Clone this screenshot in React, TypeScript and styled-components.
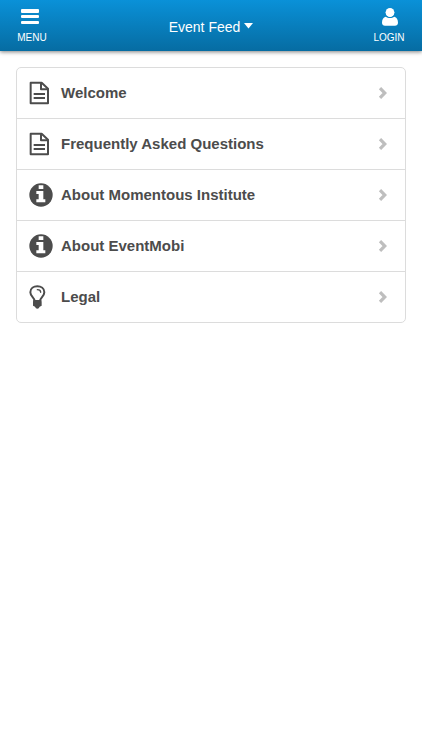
import React from "react";
import styled, { createGlobalStyle } from "styled-components";

const GlobalStyle = createGlobalStyle`
  *, *::before, *::after { box-sizing: border-box; }
  body {
    margin: 0;
    background: #fff;
    color: #4c4c4c;
    font-family: "Liberation Sans", Arial, sans-serif;
  }
`;

const Header = styled.header`
  display: grid;
  grid-template-columns: 64px 1fr 64px;
  height: 51px;
  background: linear-gradient(#0a91d8, #066ca2);
  box-shadow: 0 1px 4px rgba(0, 0, 0, 0.5);
`;

const BarButton = styled.button`
  display: flex;
  flex-direction: column;
  align-items: center;
  gap: 6px;
  padding: 8px 0 0;
  border: 0;
  background: none;
  color: #fff;
  font: 10px/12px "Liberation Sans", Arial, sans-serif;
  cursor: pointer;

  svg {
    display: block;
  }
`;

const MenuButton = styled(BarButton)`
  svg {
    margin-right: 4px;
  }
`;

const LoginButton = styled(BarButton)`
  padding-right: 2px;

  svg {
    margin-left: 1px;
  }
`;

const TitleButton = styled.button`
  display: flex;
  align-items: center;
  justify-content: center;
  gap: 4px;
  padding: 2px 0 0;
  border: 0;
  background: none;
  color: #fff;
  font: 14px/20px "Liberation Sans", Arial, sans-serif;
  cursor: pointer;
`;

const Caret = styled.svg`
  margin-bottom: 2px;
`;

const Main = styled.main`
  padding: 16px;
`;

const List = styled.ul`
  margin: 0;
  padding: 0;
  list-style: none;
  border: 1px solid #dcdcdc;
  border-radius: 5px;
  overflow: hidden;
`;

const Item = styled.li`
  & + & {
    border-top: 1px solid #dcdcdc;
  }
`;

const ItemLink = styled.a`
  display: grid;
  grid-template-columns: 24px 1fr 9px;
  column-gap: 8px;
  align-items: center;
  height: 50px;
  padding: 0 18px 0 12px;
  color: #4c4c4c;
  font-size: 15px;
  font-weight: bold;
  line-height: 20px;
  text-decoration: none;
`;

const DocumentIcon = () => (
  <svg width="24" height="24" viewBox="0 0 72 72" aria-hidden="true" fill="none" stroke="#4c4c4c" strokeWidth="6" strokeLinejoin="round">
    <path d="M5 5H38L57 23V67H5Z" />
    <path d="M36 6V25H57" />
    <path d="M14 39H48M14 51H48" />
  </svg>
);

const InfoIcon = () => (
  <svg width="24" height="24" viewBox="0 0 72 72" aria-hidden="true">
    <circle cx="36" cy="36" r="35" fill="#4c4c4c" />
    <path fill="#fff" d="M29 7H43V18H29ZM22 24H43V49H49V58H22V49H29V33H22Z" />
  </svg>
);

const BulbIcon = () => (
  <svg width="24" height="24" viewBox="0 0 72 72" aria-hidden="true">
    <path
      fill="none"
      stroke="#4c4c4c"
      strokeWidth="6"
      d="M17 48C16 38 4 34 4 22C4 10 14 4 25 4S46 10 46 22C46 34 34 38 33 48"
    />
    <path fill="none" stroke="#4c4c4c" strokeWidth="4" strokeLinecap="round" d="M25 14C31 14 35 17 35 22" />
    <path fill="#4c4c4c" d="M13 45H37L38 50L38 62L32 65Q30 71 25 71T18 65L12 62L12 50Z" />
  </svg>
);

const Chevron = () => (
  <svg width="9" height="12" viewBox="0 0 9 12" aria-hidden="true">
    <path d="M2 1.200L6.800 6L2 10.800" fill="none" stroke="#bebebe" strokeWidth="3.200" />
  </svg>
);

const items = [
  { label: "Welcome", Icon: DocumentIcon },
  { label: "Frequently Asked Questions", Icon: DocumentIcon },
  { label: "About Momentous Institute", Icon: InfoIcon },
  { label: "About EventMobi", Icon: InfoIcon },
  { label: "Legal", Icon: BulbIcon },
];

export default function App() {
  return (
    <>
      <GlobalStyle />
      <Header>
        <MenuButton type="button">
          <svg width="18" height="18" viewBox="0 0 18 18" fill="#fff" aria-hidden="true">
            <rect y="1" width="18" height="4" rx="1" />
            <rect y="7" width="18" height="3" rx="1" />
            <rect y="13" width="18" height="3" rx="1" />
          </svg>
          MENU
        </MenuButton>
        <TitleButton type="button" aria-haspopup="true">
          Event Feed
          <Caret width="9" height="6" viewBox="0 0 9 6" aria-hidden="true">
            <path fill="#fff" d="M0 0H9L4.500 5.500Z" />
          </Caret>
        </TitleButton>
        <LoginButton type="button">
          <svg width="18" height="18" viewBox="0 0 54 54" fill="#fff" aria-hidden="true">
            <path d="M14 26C7 27 3 35 3 44C3 50 7 53 12 53H42C47 53 51 50 51 44C51 35 47 27 40 26C33 31 21 31 14 26Z" />
            <ellipse cx="27" cy="13" rx="13" ry="13" />
            <path d="M14 13C14 22 20 27 27 27S40 22 40 13Z" />
          </svg>
          LOGIN
        </LoginButton>
      </Header>
      <Main>
        <List>
          {items.map(({ label, Icon }) => (
            <Item key={label}>
              <ItemLink href="#">
                <Icon />
                <span>{label}</span>
                <Chevron />
              </ItemLink>
            </Item>
          ))}
        </List>
      </Main>
    </>
  );
}
